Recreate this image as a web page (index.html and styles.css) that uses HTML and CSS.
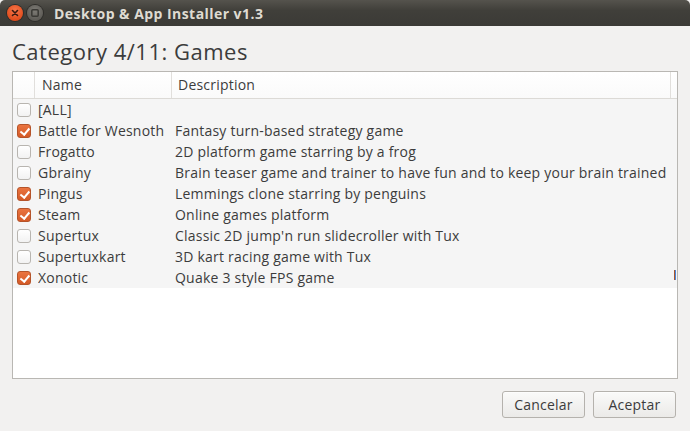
FILE: index.html
```html
<!DOCTYPE html>
<html>
<head>
<meta charset="utf-8">
<link rel="stylesheet" href="styles.css">
</head>
<body>
<div class="window">
  <div class="titlebar">
    <span class="wbtn close"><svg width="16" height="16" viewBox="0 0 16 16"><path d="M5.5 5.5 L10.5 10.5 M10.5 5.5 L5.5 10.5" stroke="#3a1a10" stroke-width="1.6" stroke-linecap="round"/></svg></span>
    <span class="wbtn maxi"><svg width="16" height="16" viewBox="0 0 16 16"><rect x="4.8" y="4.8" width="6.4" height="6.4" rx="1" fill="none" stroke="#3a3935" stroke-width="1.5"/></svg></span>
    <span class="title">Desktop &amp; App Installer v1.3</span>
  </div>
  <div class="content">
    <h1 class="heading">Category 4/11: Games</h1>
    <div class="list">
      <div class="header">
        <div class="hcell hcheck"></div>
        <div class="hcell hname">Name</div>
        <div class="hcell hdesc">Description</div>
        <div class="hcell hextra"></div>
      </div>
      <div class="rows">
        <div class="row"><span class="cb"></span><span class="name">[ALL]</span><span class="desc"></span></div>
        <div class="row"><span class="cb on"></span><span class="name">Battle for Wesnoth</span><span class="desc">Fantasy turn-based strategy game</span></div>
        <div class="row"><span class="cb"></span><span class="name">Frogatto</span><span class="desc">2D platform game starring by a frog</span></div>
        <div class="row"><span class="cb"></span><span class="name">Gbrainy</span><span class="desc">Brain teaser game and trainer to have fun and to keep your brain trained</span></div>
        <div class="row"><span class="cb on"></span><span class="name">Pingus</span><span class="desc">Lemmings clone starring by penguins</span></div>
        <div class="row"><span class="cb on"></span><span class="name">Steam</span><span class="desc">Online games platform</span></div>
        <div class="row"><span class="cb"></span><span class="name">Supertux</span><span class="desc">Classic 2D jump'n run slidecroller with Tux</span></div>
        <div class="row"><span class="cb"></span><span class="name">Supertuxkart</span><span class="desc">3D kart racing game with Tux</span></div>
        <div class="row"><span class="cb on"></span><span class="name">Xonotic</span><span class="desc">Quake 3 style FPS game</span><span class="mark"></span></div>
      </div>
    </div>
    <div class="buttons">
      <button class="btn">Cancelar</button>
      <button class="btn">Aceptar</button>
    </div>
  </div>
</div>
</body>
</html>
```
FILE: styles.css
```css
* { box-sizing: border-box; }
html, body { margin: 0; padding: 0; }
body {
  width: 690px;
  height: 431px;
  overflow: hidden;
  font-family: "Open Sans", "Noto Sans", sans-serif;
  font-size: 14px;
  letter-spacing: 0.22px;
  color: #3c3c3c;
  background: #f2f1f0;
}
.window { display: flex; flex-direction: column; height: 431px; }
.titlebar {
  height: 27px;
  display: flex;
  align-items: center;
  padding-left: 7px;
  background: linear-gradient(#55534d, #403f3a 40%, #3b3a36);
  border-radius: 5px 5px 0 0;
}
.wbtn {
  width: 16px; height: 16px; border-radius: 50%;
  display: flex; align-items: center; justify-content: center;
  margin-right: 3px;
}
.wbtn.close {
  background: radial-gradient(circle at 50% 35%, #f7764a, #e24d1d 70%, #c9441b);
  box-shadow: 0 0 0 1px #2e2d2a;
}
.wbtn.maxi {
  background: radial-gradient(circle at 50% 35%, #7d7b75, #5e5c57 70%, #53524d);
  box-shadow: 0 0 0 1px #2e2d2a;
  margin-left: 1px;
}
.title {
  margin-left: 8px;
  color: #dfdbd2;
  font-weight: bold;
  font-size: 14px;
  letter-spacing: 0.45px;
}
.content {
  flex: 1;
  display: flex;
  flex-direction: column;
  padding: 10px 12px 13px 12px;
}
.heading {
  margin: 0 0 8px 0;
  font-weight: normal;
  font-size: 22px;
  letter-spacing: 0.5px;
  line-height: 31px;
  color: #3c3c3c;
  height: 27px;
}
.list {
  height: 308px;
  border: 1px solid #b9b7b3;
  background: #ffffff;
  display: flex;
  flex-direction: column;
  width: 666px;
}
.header {
  height: 27px;
  display: flex;
  background: linear-gradient(#ffffff, #fafafa);
  border-bottom: 1px solid #dcdad6;
}
.hcell {
  height: 26px;
  line-height: 25px;
  padding-left: 6px;
  border-right: 1px solid #e1dfdc;
  color: #3c3c3c;
}
.hcheck { width: 22px; }
.hname { width: 137px; padding-left: 7px; }
.hdesc { width: 499px; }
.hextra { flex: 1; border-right: none; }
.rows { background: #f5f5f5; }
.row {
  height: 21px;
  display: flex;
  align-items: center;
  position: relative;
}
.cb {
  width: 14px; height: 14px;
  margin-left: 4px;
  border: 1px solid #b8b5b0;
  border-radius: 3px;
  background: linear-gradient(#ffffff, #f2f2f2);
  flex-shrink: 0;
}
.cb.on {
  border-color: #b5542a;
  background: linear-gradient(#ea7440, #d45a27) ;
  position: relative;
}
.cb.on::after {
  content: "";
  position: absolute;
  left: 3.5px; top: 1px;
  width: 3.5px; height: 7px;
  border: solid #ffffff;
  border-width: 0 2px 2px 0;
  transform: rotate(40deg);
}
.name, .desc {
  line-height: 20px;
  padding-top: 1px;
  height: 21px;
}
.name {
  width: 137px;
  margin-left: 7px;
  white-space: nowrap;
  overflow: hidden;
}
.desc {
  margin-left: 0;
  white-space: nowrap;
}
.mark {
  position: absolute;
  right: 1px; top: 3px;
  width: 2px; height: 10px;
  background: linear-gradient(90deg, #a8572f 40%, #4a86d8 40%);
}
.buttons {
  display: flex;
  justify-content: flex-end;
  gap: 8px;
  margin-top: 12px;
  padding-right: 2px;
}
.btn {
  width: 83px;
  height: 27px;
  font-family: inherit;
  font-size: 14px;
  letter-spacing: 0.2px;
  color: #3c3c3c;
  border: 1px solid #b5b2ad;
  border-radius: 3px;
  background: linear-gradient(#fafaf9, #ebeae8);
  box-shadow: 0 1px 0 rgba(255,255,255,0.6) inset;
  padding: 0;
}
```
